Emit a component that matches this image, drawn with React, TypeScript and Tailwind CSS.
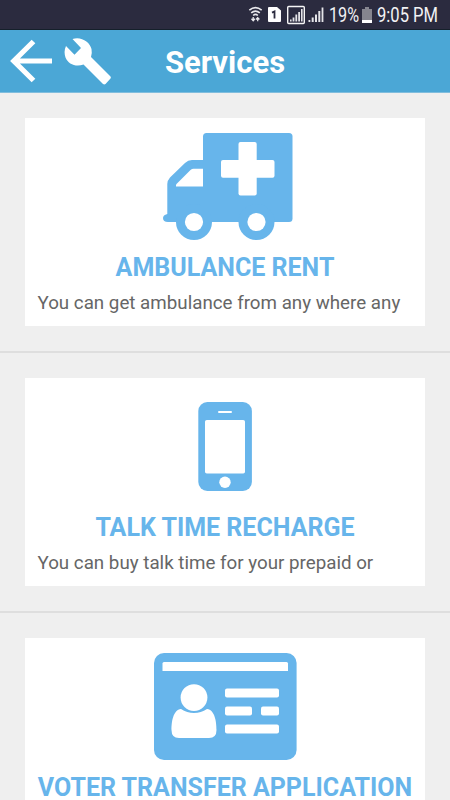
import type { ReactNode } from "react";

function Ambulance() {
  return (
    <svg viewBox="163 133 130 108" className="ml-[5px] h-[108px] w-[130px]">
      <g fill="#67b5eb">
        <rect x="203" y="133" width="89.500" height="89" rx="3.500" />
        <path d="M204 160H192Q188 160 185 163L170 177.500Q167.300 180.500 167.300 184V214Q163 215 163 218Q163 222 168 222H204Z" />
        <circle cx="194" cy="222" r="18" />
        <circle cx="256.500" cy="222" r="18" />
      </g>
      <g fill="#fff">
        <path d="M193.500 168.700H203V186.500H176V184.500L190.500 170Q192 168.700 193.500 168.700Z" />
        <circle cx="194" cy="222" r="9.100" />
        <circle cx="256.500" cy="222" r="9.100" />
        <rect x="238.500" y="142" width="18.200" height="53.500" rx="2" />
        <rect x="221" y="160" width="53.500" height="17.700" rx="2" />
      </g>
    </svg>
  );
}

function Phone() {
  return (
    <svg viewBox="198 402 54 89" className="mt-[9px] h-[89px] w-[54px]">
      <rect x="198.300" y="402" width="53.600" height="89" rx="9" fill="#67b5eb" />
      <g fill="#fff">
        <rect x="205" y="420" width="40" height="53.500" rx="1.800" />
        <rect x="218" y="411" width="14" height="2" rx="1" />
        <circle cx="225" cy="482.300" r="5.700" />
      </g>
    </svg>
  );
}

function IdCard() {
  return (
    <svg viewBox="154 653 143 107" className="h-[107px] w-[143px]">
      <rect x="154" y="653" width="142.600" height="107" rx="10" fill="#67b5eb" />
      <g fill="#fff">
        <path d="M162.500 671V663.500Q162.500 662 164 662H286.500Q288 662 288 663.500V671Z" />
        <path d="M181 709C173 710 171.500 722 171.500 730Q171.500 738 179 738H209Q216.500 738 216.500 730C216.500 722 215 710 207 709Q201 713 194 713Q187 713 181 709Z" />
        <circle cx="194" cy="697.600" r="14.500" fill="#67b5eb" />
        <circle cx="194" cy="697.600" r="13.400" />
        <rect x="225" y="688.600" width="54" height="9" rx="2" />
        <rect x="225" y="706.500" width="27" height="9" rx="2" />
        <rect x="261" y="706.500" width="18" height="9" rx="2" />
        <rect x="225" y="724.500" width="54" height="9" rx="2" />
      </g>
    </svg>
  );
}

function StatusIcons() {
  return (
    <svg viewBox="248 0 78 30" className="h-[30px] w-[78px] shrink-0" fill="none">
      <path d="M249.300 10.200Q255.500 5.200 261.700 10.200M251.200 12.900Q255.500 9.300 259.800 12.900M253.200 15.500Q255.500 13.400 257.800 15.500" stroke="#e8e8ec" strokeWidth="1.600" />
      <path d="M253.200 17V20.500M251.500 18.800L253.200 20.700L254.900 18.800M257.700 21.300V17.800M256 19.500L257.700 17.600L259.400 19.500" stroke="#e8e8ec" strokeWidth="1.300" />
      <path d="M269 7H277L281 10.500V21Q281 22 280 22H269Q268 22 268 21V8Q268 7 269 7Z" fill="#fff" />
      <path d="M272 12.600L274.500 11.400V18.500" stroke="#2b2b3f" strokeWidth="1.800" />
      <rect x="287.700" y="6.500" width="16.600" height="17" rx="1" stroke="#f5f5f5" strokeWidth="1.400" />
      <g fill="#e4e4e8">
        <path d="M290 21.500V19.500H291.600V21.500ZM292.600 21.500V17.500H294.400V21.500ZM295.400 21.500V14.500H297.200V21.500ZM298.200 21.500V12H300V21.500ZM301 21.500V9H302.600V21.500Z" />
        <path d="M308.500 22V20H310.300V22ZM311.700 22V17.500H313.700V22ZM315 22V14.500H317V22ZM318.300 22V11H320.300V22ZM321.600 22V7.500H323.400V22Z" />
      </g>
    </svg>
  );
}

function Service({ title, text, children }: { title: string; text?: string; children: ReactNode }) {
  return (
    <section className="h-[260px] shrink-0 border-b-2 border-[#dedede] px-[25px] pt-[24.500px]">
      <div className="flex h-[208.500px] flex-col bg-white pt-[15.500px]">
        <div className="flex h-[120px] shrink-0 justify-center">{children}</div>
        <h2 className="text-center text-[25px] leading-[30px] font-bold whitespace-nowrap text-[#67b5eb]">{title}</h2>
        {text && <p className="mt-[8px] pl-[12.500px] text-[18.750px] leading-[24px] whitespace-nowrap text-[#666]">{text}</p>}
      </div>
    </section>
  );
}

export default function App() {
  return (
    <main className="flex h-[800px] w-[450px] flex-col overflow-hidden bg-[#efefef] font-['Roboto',sans-serif]">
      <div className="flex h-[30px] shrink-0 items-center border-b border-[#15202b] bg-[#2b2b3f] pl-[248px] text-[#f2f2f4]">
        <StatusIcons />
        <span className="ml-[3px] w-[33px] shrink-0 origin-left scale-x-[.83] pt-[2px] text-[19.500px] leading-[28px]">19%</span>
        <svg viewBox="0 0 10 16" className="h-4 w-2.5 shrink-0">
          <path d="M3 0H7V2H10V16H0V2H3Z" fill="#85858f" />
          <path d="M0 13H10V16H0Z" fill="#fff" />
        </svg>
        <span className="ml-[5px] origin-left scale-x-[.85] pt-[2px] text-[19.500px] leading-[28px] whitespace-nowrap">9:05 PM</span>
      </div>
      <header className="grid h-[63px] shrink-0 grid-cols-[1fr_auto_1fr] items-center border-b border-[#80bddd] bg-[#4ba7d6]">
        <svg viewBox="0 30 120 62" className="h-[62px] w-[120px]">
          <path d="M52 61H14M33.500 41.500L13.800 61L33.500 80.500" fill="none" stroke="#fff" strokeWidth="5.200" />
          <path fill="#fff" d="M72.500 39C81 36 90 42 91.500 49Q92.300 53 91 57L110.500 76.500Q111.300 77.500 110.500 78.500L105.500 84Q104.300 84.800 103 84L83.500 64.500C76 67.500 68 64 65.500 57.500Q63.500 51.500 66 46L74.500 54.700L81 48Z" />
        </svg>
        <h1 className="pt-[4px] text-[31px] leading-[58px] font-bold text-white">Services</h1>
      </header>
      <Service title="AMBULANCE RENT" text="You can get ambulance from any where any"><Ambulance /></Service>
      <Service title="TALK TIME RECHARGE" text="You can buy talk time for your prepaid or"><Phone /></Service>
      <Service title="VOTER TRANSFER APPLICATION"><IdCard /></Service>
    </main>
  );
}
